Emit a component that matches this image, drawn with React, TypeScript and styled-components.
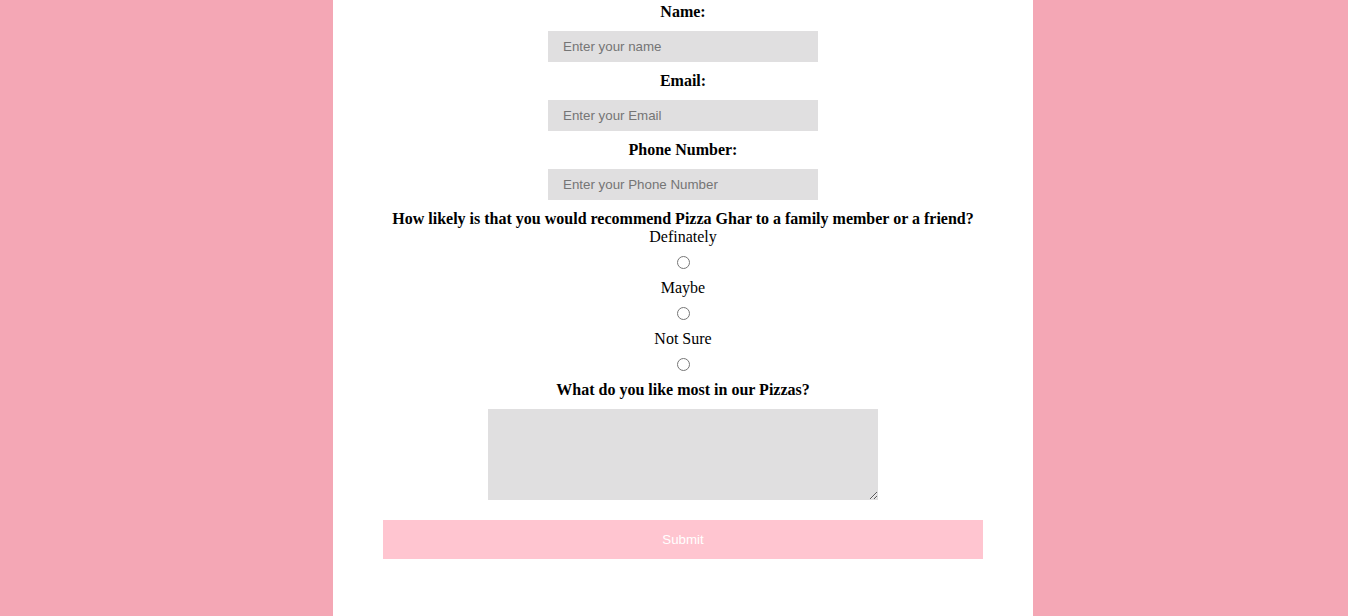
import React from 'react'
import styled, {createGlobalStyle} from 'styled-components'

const GlobalStyle = createGlobalStyle`
  html, body {
    margin: 0;
    padding: 0;
    background: #f4a7b5;
  }
  body {
    font-family: "Liberation Serif", "Times New Roman", serif;
    font-size: 16px;
    color: #000;
  }
`

const Page = styled.div`
  display: flex;
  padding-left: 333px;
  min-height: 100vh;
`

const Panel = styled.main`
  width: 700px;
  min-height: 616px;
  background: #ffffff;
`

const Form = styled.form`
  display: flex;
  flex-direction: column;
  align-items: center;
  gap: 10px;
  padding-top: 3px;
`

const Label = styled.label`
  display: block;
  font-weight: 700;
  line-height: 18px;
  text-align: center;
`

const Field = styled.input`
  box-sizing: border-box;
  width: 270px;
  height: 31px;
  padding: 0 15px;
  border: none;
  outline: none;
  background: #e0dfe0;
  font-family: "Liberation Sans", Arial, sans-serif;
  font-size: 13.333px;
  color: #000;

  &::placeholder {
    color: #757575;
  }
`

const Question = styled.fieldset`
  display: flex;
  flex-direction: column;
  align-items: center;
  margin: 0;
  padding: 0;
  border: none;
`

const Options = styled.div`
  display: flex;
  flex-direction: column;
  align-items: center;
  gap: 10px;
`

const OptionText = styled.span`
  display: block;
  line-height: 18px;
`

const Radio = styled.input`
  display: block;
  width: 13px;
  height: 13px;
  margin: 0;
`

const Comments = styled.textarea`
  box-sizing: border-box;
  width: 390px;
  height: 91px;
  border: none;
  outline: none;
  background: #e0dfe0;
`

const Submit = styled.button`
  box-sizing: border-box;
  width: 600px;
  height: 39px;
  margin-top: 10px;
  border: none;
  background: #ffc5d0;
  color: #ffffff;
  font-family: "Liberation Sans", Arial, sans-serif;
  font-size: 13.333px;
  cursor: pointer;
`

const options = ['Definately', 'Maybe', 'Not Sure']

const App = () => (
  <>
    <GlobalStyle/>
    <Page>
      <Panel>
        <Form onSubmit={(event) => event.preventDefault()}>
          <Label htmlFor="name">Name:</Label>
          <Field id="name" type="text" placeholder="Enter your name"/>
          <Label htmlFor="email">Email:</Label>
          <Field id="email" type="email" placeholder="Enter your Email"/>
          <Label htmlFor="phone">Phone Number:</Label>
          <Field id="phone" type="tel" placeholder="Enter your Phone Number"/>
          <Question>
            <Label as="legend">
              How likely is that you would recommend Pizza Ghar to a family member or a friend?
            </Label>
            <Options>
              {options.map((option) => (
                <React.Fragment key={option}>
                  <OptionText>{option}</OptionText>
                  <Radio type="radio" name="recommend" value={option} aria-label={option}/>
                </React.Fragment>
              ))}
            </Options>
          </Question>
          <Label htmlFor="likes">What do you like most in our Pizzas?</Label>
          <Comments id="likes"/>
          <Submit type="submit">Submit</Submit>
        </Form>
      </Panel>
    </Page>
  </>
)

export default App
